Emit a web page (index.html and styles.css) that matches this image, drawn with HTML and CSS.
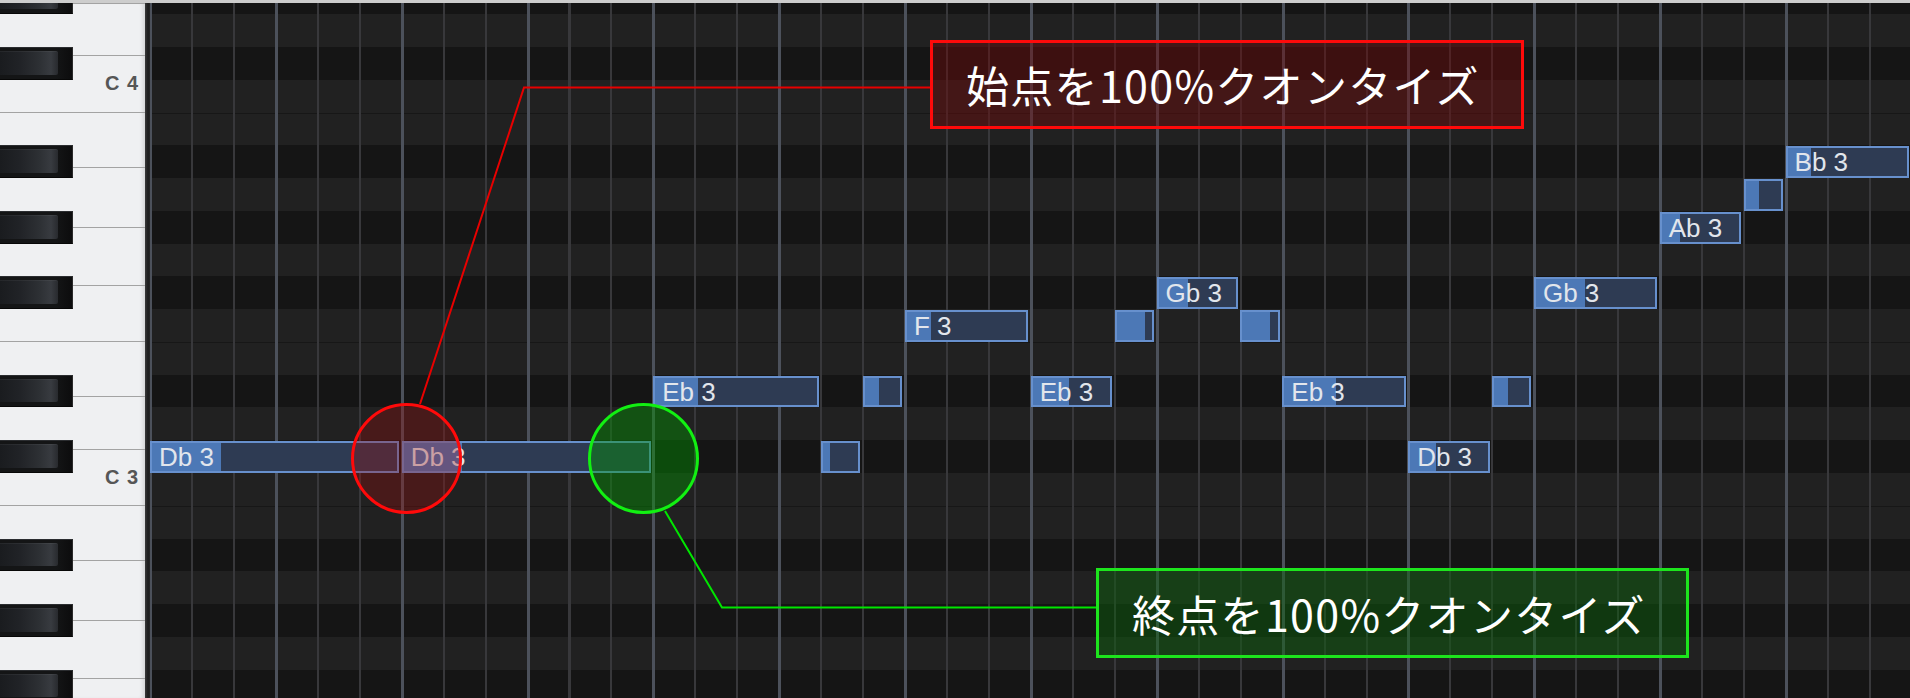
FILE: index.html
```html
<!DOCTYPE html>
<html lang="ja">
<head>
<meta charset="utf-8">
<title>Piano Roll Quantize</title>
<link rel="stylesheet" href="styles.css">
</head>
<body>
<div class="app">
  <div class="topbar"></div>
  <div class="main">
    <div class="piano">
      <div class="whites">
        <div class="wkey w-top"></div>
        <div class="wkey w-d"></div>
        <div class="wkey w-c"><span class="oct">C 4</span></div>
        <div class="wkey w-b"></div>
        <div class="wkey w-a"></div>
        <div class="wkey w-g"></div>
        <div class="wkey w-f"></div>
        <div class="wkey w-e"></div>
        <div class="wkey w-d"></div>
        <div class="wkey w-c"><span class="oct">C 3</span></div>
        <div class="wkey w-b"></div>
        <div class="wkey w-a"></div>
        <div class="wkey w-g"></div>
        <div class="wkey w-f"></div>
      </div>
      <div class="blacks">
        <div class="slot"><div class="bkey"><div class="face"></div></div></div>
        <div class="slot"></div>
        <div class="slot"><div class="bkey"><div class="face"></div></div></div>
        <div class="slot"></div>
        <div class="slot"></div>
        <div class="slot"><div class="bkey"><div class="face"></div></div></div>
        <div class="slot"></div>
        <div class="slot"><div class="bkey"><div class="face"></div></div></div>
        <div class="slot"></div>
        <div class="slot"><div class="bkey"><div class="face"></div></div></div>
        <div class="slot"></div>
        <div class="slot"></div>
        <div class="slot"><div class="bkey"><div class="face"></div></div></div>
        <div class="slot"></div>
        <div class="slot"><div class="bkey"><div class="face"></div></div></div>
        <div class="slot"></div>
        <div class="slot"></div>
        <div class="slot"><div class="bkey"><div class="face"></div></div></div>
        <div class="slot"></div>
        <div class="slot"><div class="bkey"><div class="face"></div></div></div>
        <div class="slot"></div>
        <div class="slot"><div class="bkey"><div class="face"></div></div></div>
      </div>
    </div>
    <div class="divider"></div>
    <div class="roll">
      <div class="lanes">
        <div class="lane dk"></div>
        <div class="lane lt"></div>
        <div class="lane dk"></div>
        <div class="lane lt"></div>
        <div class="lane lt sep"></div>
        <div class="lane dk"></div>
        <div class="lane lt"></div>
        <div class="lane dk"></div>
        <div class="lane lt"></div>
        <div class="lane dk"></div>
        <div class="lane lt"></div>
        <div class="lane lt sep"></div>
        <div class="lane dk"></div>
        <div class="lane lt"></div>
        <div class="lane dk"></div>
        <div class="lane lt"></div>
        <div class="lane lt sep"></div>
        <div class="lane dk"></div>
        <div class="lane lt"></div>
        <div class="lane dk"></div>
        <div class="lane lt"></div>
        <div class="lane dk"></div>
      </div>
      <div class="beats"></div>
      <div class="notes">
        <div class="note" style="grid-column:1/span 6;grid-row:15"><div class="vel" style="width:69px"></div><span class="lbl">Db 3</span></div>
        <div class="note" style="grid-column:7/span 6;grid-row:15"><div class="vel" style="width:58px"></div><span class="lbl">Db 3</span></div>
        <div class="note" style="grid-column:13/span 4;grid-row:13"><div class="vel" style="width:43px"></div><span class="lbl">Eb 3</span></div>
        <div class="note" style="grid-column:17/span 1;grid-row:15"><div class="vel" style="width:7px"></div></div>
        <div class="note" style="grid-column:18/span 1;grid-row:13"><div class="vel" style="width:14px"></div></div>
        <div class="note" style="grid-column:19/span 3;grid-row:11"><div class="vel" style="width:24px"></div><span class="lbl">F 3</span></div>
        <div class="note" style="grid-column:22/span 2;grid-row:13"><div class="vel" style="width:36px"></div><span class="lbl">Eb 3</span></div>
        <div class="note" style="grid-column:24/span 1;grid-row:11"><div class="vel" style="width:28px"></div></div>
        <div class="note" style="grid-column:25/span 2;grid-row:10"><div class="vel" style="width:29px"></div><span class="lbl">Gb 3</span></div>
        <div class="note" style="grid-column:27/span 1;grid-row:11"><div class="vel" style="width:28px"></div></div>
        <div class="note" style="grid-column:28/span 3;grid-row:13"><div class="vel" style="width:52px"></div><span class="lbl">Eb 3</span></div>
        <div class="note" style="grid-column:31/span 2;grid-row:15"><div class="vel" style="width:26px"></div><span class="lbl">Db 3</span></div>
        <div class="note" style="grid-column:33/span 1;grid-row:13"><div class="vel" style="width:14px"></div></div>
        <div class="note" style="grid-column:34/span 3;grid-row:10"><div class="vel" style="width:49px"></div><span class="lbl">Gb 3</span></div>
        <div class="note" style="grid-column:37/span 2;grid-row:8"><div class="vel" style="width:18px"></div><span class="lbl">Ab 3</span></div>
        <div class="note" style="grid-column:39/span 1;grid-row:7"><div class="vel" style="width:13px"></div></div>
        <div class="note" style="grid-column:40/span 3;grid-row:6"><div class="vel" style="width:23px"></div><span class="lbl">Bb 3</span></div>
      </div>
    </div>
  </div>
  <div class="annot">
    <svg class="leaders" width="1910" height="698" viewBox="0 0 1910 698">
      <polyline class="lead-red" points="931,87.5 524,87.5 420,404"/>
      <polyline class="lead-green" points="665,511 722,607.5 1097,607.5"/>
    </svg>
    <div class="ring ring-red"></div>
    <div class="ring ring-green"></div>
    <div class="callout callout-red">始点を100%クオンタイズ</div>
    <div class="callout callout-green">終点を100%クオンタイズ</div>
  </div>
</div>
</body>
</html>
```

FILE: styles.css
```css
* { box-sizing: border-box; }
html, body { margin: 0; padding: 0; }
body {
  width: 1910px;
  height: 698px;
  overflow: hidden;
  background: #151515;
  font-family: "Liberation Sans", Arial, sans-serif;
}
.app {
  position: relative;
  width: 1910px;
  height: 698px;
  overflow: hidden;
}
.topbar {
  height: 3px;
  background: #cdcdcd;
}
.main {
  display: flex;
  height: 695px;
}

/* ---------- piano keyboard ---------- */
.piano {
  width: 145px;
  flex: none;
  overflow: hidden;
  display: grid;
  background: #eff0f2;
  box-shadow: inset -4px 0 4px -2px rgba(0,0,0,0.12);
}
.whites, .blacks {
  grid-area: 1 / 1;
  margin-top: -21.48px;
  display: flex;
  flex-direction: column;
}
.wkey {
  flex: none;
  border-bottom: 1px solid #a3a3a3;
  display: flex;
  align-items: center;
  justify-content: flex-end;
  padding-right: 6px;
}
.w-top { height: 22.32px; }
.w-c { height: 56.4px; }
.w-d { height: 52.4px; }
.w-e { height: 55.4px; }
.w-f { height: 55.9px; }
.w-g { height: 58.4px; }
.w-a { height: 59.4px; }
.w-b { height: 55.5px; }
.oct {
  font-size: 20px;
  font-weight: bold;
  color: #565656;
  letter-spacing: 1px;
}
.slot {
  height: 32.78px;
  flex: none;
}
.bkey {
  width: 73px;
  height: 100%;
  display: flex;
  background: linear-gradient(90deg, #141516 0%, #141516 78%, #0c0c0d 100%);
  border-top: 1px solid #2b2d30;
  border-bottom: 1px solid #070707;
  border-right: 1px solid #2a2a2a;
}
.face {
  width: 58px;
  margin: 3px 0 4px 0;
  background: linear-gradient(90deg, #1a1c1f 0%, #212327 35%, #2e3135 70%, #383b40 88%, #282a2e 100%);
  border-radius: 0 2px 2px 0;
  box-shadow: inset 0 1px 0 rgba(255,255,255,0.05);
}
.divider {
  width: 5px;
  flex: none;
  background: linear-gradient(90deg, #3a3a3a 0%, #1c1c1c 60%, #262626 100%);
}

/* ---------- piano roll ---------- */
.roll {
  flex: 1;
  overflow: hidden;
  display: grid;
  height: 695px;
}
.lanes, .beats, .notes { grid-area: 1 / 1; }
.lanes {
  margin-top: -21.48px;
  display: flex;
  flex-direction: column;
}
.lane { height: 32.78px; flex: none; }
.lane.dk { background: #151515; }
.lane.lt { background: #212121; }
.lane.sep { border-top: 1px solid #171717; }
.beats {
  background-image:
    repeating-linear-gradient(90deg, #4c515b 0 3px, transparent 3px 125.85px),
    repeating-linear-gradient(90deg, #38383b 0 2px, transparent 2px 41.95px);
  background-position: -1px 0, -1px 0;
}
.notes {
  margin-top: -21.48px;
  display: grid;
  grid-template-columns: repeat(43, 41.95px);
  grid-template-rows: repeat(22, 32.78px);
  align-self: start;
}
.note {
  margin: 1px 2.5px 0 0;
  border: 2px solid #6790cd;
  background: #2e3b53;
  display: grid;
  overflow: hidden;
}
.vel {
  grid-area: 1 / 1;
  background: #4c78b6;
  height: 100%;
}
.lbl {
  grid-area: 1 / 1;
  align-self: center;
  padding-left: 7px;
  font-size: 26px;
  line-height: 1;
  color: #e2e6ec;
  white-space: nowrap;
}

/* ---------- annotations ---------- */
.annot {
  position: absolute;
  left: 0;
  top: 0;
  width: 1910px;
  height: 698px;
  pointer-events: none;
}
.leaders {
  position: absolute;
  left: 0;
  top: 0;
}
.leaders polyline {
  fill: none;
  stroke-width: 2;
}
.lead-red { stroke: #e80000; }
.lead-green { stroke: #00e600; }
.ring {
  position: absolute;
  top: 403px;
  width: 111px;
  height: 111px;
  border-radius: 50%;
  border: 3px solid;
}
.ring-red {
  left: 350.5px;
  border-color: #ff0a0a;
  background: rgba(155, 12, 12, 0.32);
}
.ring-green {
  left: 587.5px;
  border-color: #12f012;
  background: rgba(0, 150, 0, 0.42);
}
.callout {
  position: absolute;
  display: flex;
  align-items: center;
  border: 3px solid;
  color: #ffffff;
  font-family: "Noto Sans CJK JP", "Noto Sans", sans-serif;
  font-size: 43px;
  letter-spacing: 1.3px;
  line-height: 1;
  white-space: nowrap;
}
.callout-red {
  left: 930px;
  top: 40px;
  width: 594px;
  height: 89px;
  padding-left: 33px;
  border-color: #ff0a0a;
  background: rgba(110, 10, 10, 0.45);
}
.callout-green {
  left: 1096px;
  top: 568px;
  width: 593px;
  height: 90px;
  padding-left: 33px;
  border-color: #1de51d;
  background: rgba(12, 100, 12, 0.45);
}
```
